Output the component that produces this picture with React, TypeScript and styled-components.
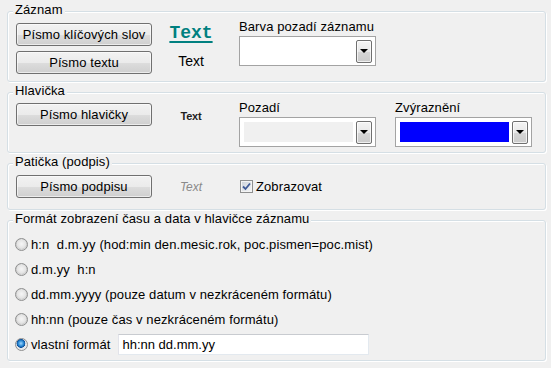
import React from "react";
import styled, { createGlobalStyle } from "styled-components";

const GlobalStyle = createGlobalStyle`
  html, body { margin: 0; padding: 0; background: #f0f0f0; }
  body {
    font-family: "Liberation Sans", Arial, sans-serif;
    font-size: 13px;
    letter-spacing: 0.1px;
    color: #000;
  }
  * { box-sizing: border-box; }
`;

const Page = styled.div`
  width: 551px;
  height: 368px;
  padding: 11px 5px 0 7px;
  display: flex;
  flex-direction: column;
  gap: 10px;
`;

const Group = styled.section<{ $h: number }>`
  position: relative;
  height: ${(p) => p.$h}px;
  border: 1px solid #d5dfe5;
  border-radius: 3px;
  box-shadow: inset 1px 1px 0 #fff, 1px 1px 0 #fff;
`;

const Legend = styled.span`
  position: absolute;
  top: -9px;
  left: 5px;
  padding: 0 2px;
  line-height: 14px;
  background: #f0f0f0;
  white-space: nowrap;
`;

const Row = styled.div<{ $top: number; $align?: string }>`
  display: flex;
  align-items: ${(p) => p.$align || "flex-start"};
  padding: ${(p) => p.$top}px 8px 0 8px;
`;

const ButtonCol = styled.div<{ $mt?: number }>`
  display: flex;
  flex-direction: column;
  gap: 5px;
  margin-top: ${(p) => p.$mt || 0}px;
`;

const Button = styled.button`
  width: 136px;
  height: 23px;
  padding: 0;
  font: inherit;
  letter-spacing: 0.1px;
  color: #000;
  border: 1px solid #707070;
  border-radius: 3px;
  background: linear-gradient(#f2f2f2 0%, #ebebeb 50%, #dddddd 51%, #cfcfcf 100%);
  box-shadow: inset 0 0 0 1px rgba(255, 255, 255, 0.6);
`;

const TextCol = styled.div<{ $mt?: number; $gap?: number }>`
  width: 78px;
  display: flex;
  flex-direction: column;
  align-items: center;
  gap: ${(p) => p.$gap || 0}px;
  margin-top: ${(p) => p.$mt || 0}px;
`;

const KeywordSample = styled.span`
  font-family: "Liberation Mono", "Courier New", monospace;
  font-weight: bold;
  font-size: 18px;
  line-height: 20px;
  letter-spacing: 0;
  color: #008080;
  text-decoration: underline;
  text-decoration-thickness: 2px;
  text-underline-offset: 3px;
`;

const PlainSample = styled.span`
  font-size: 14px;
  line-height: 16px;
  letter-spacing: 0;
`;

const HeaderSample = styled.span`
  font-size: 11px;
  font-weight: bold;
  line-height: 14px;
  letter-spacing: -0.2px;
  color: #1f1f1f;
`;

const FooterSample = styled.span`
  font-size: 12px;
  font-style: italic;
  line-height: 14px;
  letter-spacing: 0;
  color: #8a8a8a;
`;

const ComboCol = styled.div<{ $ml: number }>`
  display: flex;
  flex-direction: column;
  gap: 2px;
  margin-left: ${(p) => p.$ml}px;
`;

const Label = styled.span`
  line-height: 14px;
  white-space: nowrap;
`;

const Combo = styled.div`
  width: 137px;
  height: 30px;
  display: flex;
  align-items: center;
  padding: 0 3px 0 4px;
  border: 1px solid #a3a3a3;
  background: #fff;
`;

const Swatch = styled.div<{ $color: string }>`
  flex: 1;
  height: 20px;
  margin-right: 3px;
  background: ${(p) => p.$color};
`;

const ArrowButton = styled.div`
  width: 16px;
  height: 23px;
  display: flex;
  align-items: center;
  justify-content: center;
  border: 1px solid #707070;
  border-radius: 2px;
  background: linear-gradient(#f4f4f4 0%, #e8e8e8 50%, #d6d6d6 51%, #cbcbcb 100%);
  box-shadow: inset 0 0 0 1px rgba(255, 255, 255, 0.7);
`;

const Triangle = styled.span`
  width: 0;
  height: 0;
  border-left: 4px solid transparent;
  border-right: 4px solid transparent;
  border-top: 4px solid #000;
`;

const CheckWrap = styled.label`
  display: flex;
  align-items: center;
  gap: 3px;
  margin-left: 10px;
  line-height: 14px;
`;

const CheckBox = styled.span`
  width: 13px;
  height: 13px;
  display: flex;
  align-items: center;
  justify-content: center;
  border: 1px solid #8e8f8f;
  background: linear-gradient(135deg, #cbd1d8, #f6f7f8);
  box-shadow: inset 0 0 0 1px #f4f4f4;
`;

const RadioList = styled.div`
  display: flex;
  flex-direction: column;
  padding: 11px 8px 0 7px;
`;

const RadioRow = styled.div`
  height: 25px;
  display: flex;
  align-items: center;
  white-space: pre;
`;

const Radio = styled.span<{ $on?: boolean }>`
  width: 13px;
  height: 13px;
  flex: none;
  margin-right: 3px;
  border-radius: 50%;
  border: 1px solid #8e8f8f;
  background: ${(p) =>
    p.$on
      ? "radial-gradient(circle at 45% 40%, #9fd5ff 0, #2a8ad4 30%, #0b4f9a 46%, #dfe3e8 52%, #f4f4f4 100%)"
      : "radial-gradient(circle at 50% 45%, #f6f6f6 0, #e2e2e2 55%, #cfcfcf 60%, #f4f4f4 100%)"};
`;

const FormatInput = styled.input`
  width: 251px;
  height: 21px;
  margin-left: 8px;
  padding: 0 3px;
  font: inherit;
  font-size: 13px;
  letter-spacing: 0;
  color: #000;
  background: #fff;
  border: 1px solid;
  border-color: #c8cbd0 #e3e9ef #e3e9ef #e2e3ea;
  outline: none;
`;

const CheckMark = () => (
  <svg width="9" height="9" viewBox="0 0 9 9">
    <path d="M1 4.5 L3.5 7 L8 1.5" fill="none" stroke="#3f5a96" strokeWidth="1.8" />
  </svg>
);

const Combobox = ({ color }: { color: string }) => (
  <Combo>
    <Swatch $color={color} />
    <ArrowButton>
      <Triangle />
    </ArrowButton>
  </Combo>
);

const formats = [
  "h:n  d.m.yy (hod:min den.mesic.rok, poc.pismen=poc.mist)",
  "d.m.yy  h:n",
  "dd.mm.yyyy (pouze datum v nezkráceném formátu)",
  "hh:nn (pouze čas v nezkráceném formátu)",
];

export default function App() {
  return (
    <>
      <GlobalStyle />
      <Page>
        <Group $h={71}>
          <Legend>Záznam</Legend>
          <Row $top={8}>
            <ButtonCol $mt={3}>
              <Button>Písmo klíčových slov</Button>
              <Button>Písmo textu</Button>
            </ButtonCol>
            <TextCol $mt={3} $gap={10}>
              <KeywordSample>Text</KeywordSample>
              <PlainSample>Text</PlainSample>
            </TextCol>
            <ComboCol $ml={9}>
              <Label>Barva pozadí záznamu</Label>
              <Combobox color="#ffffff" />
            </ComboCol>
          </Row>
        </Group>

        <Group $h={61}>
          <Legend>Hlavička</Legend>
          <Row $top={8}>
            <ButtonCol $mt={2}>
              <Button>Písmo hlavičky</Button>
            </ButtonCol>
            <TextCol $mt={8}>
              <HeaderSample>Text</HeaderSample>
            </TextCol>
            <ComboCol $ml={9}>
              <Label>Pozadí</Label>
              <Combobox color="#f0f0f0" />
            </ComboCol>
            <ComboCol $ml={19}>
              <Label>Zvýraznění</Label>
              <Combobox color="#0000ff" />
            </ComboCol>
          </Row>
        </Group>

        <Group $h={47}>
          <Legend>Patička (podpis)</Legend>
          <Row $top={11} $align="center">
            <ButtonCol>
              <Button>Písmo podpisu</Button>
            </ButtonCol>
            <TextCol>
              <FooterSample>Text</FooterSample>
            </TextCol>
            <CheckWrap>
              <CheckBox>
                <CheckMark />
              </CheckBox>
              Zobrazovat
            </CheckWrap>
          </Row>
        </Group>

        <Group $h={141}>
          <Legend>Formát zobrazení času a data v hlavičce záznamu</Legend>
          <RadioList>
            {formats.map((f) => (
              <RadioRow key={f}>
                <Radio />
                {f}
              </RadioRow>
            ))}
            <RadioRow>
              <Radio $on />
              vlastní formát
              <FormatInput defaultValue="hh:nn dd.mm.yy" />
            </RadioRow>
          </RadioList>
        </Group>
      </Page>
    </>
  );
}
